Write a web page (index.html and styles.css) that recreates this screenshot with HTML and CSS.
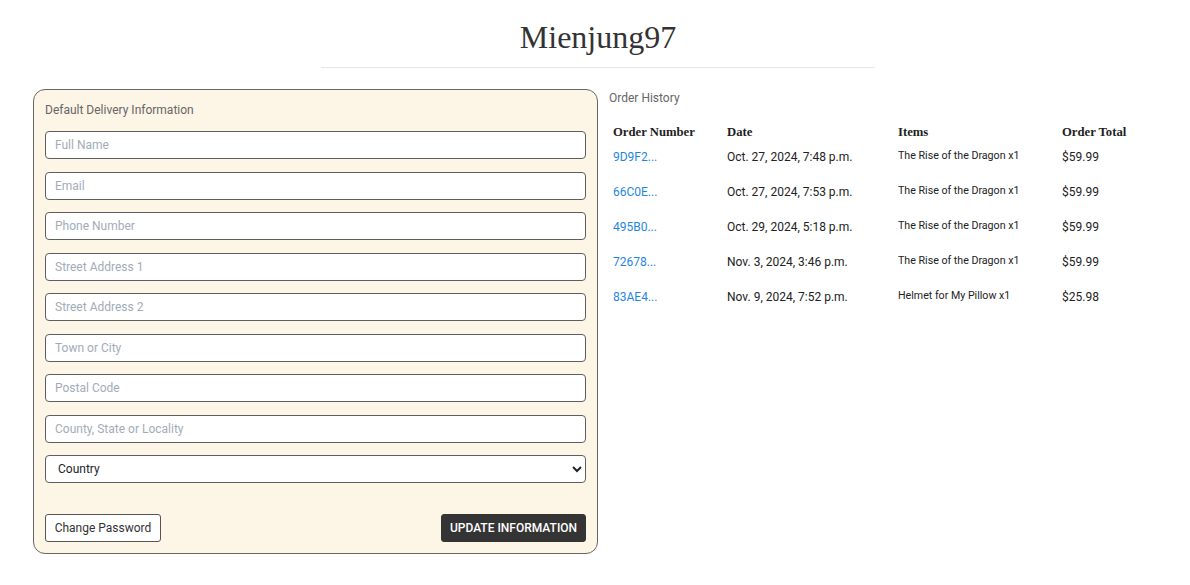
FILE: index.html
```html
<!DOCTYPE html>
<html lang="en">
<head>
<meta charset="utf-8">
<title>Mienjung97</title>
<link rel="stylesheet" href="styles.css">
</head>
<body>
<header class="page-head">
  <h1 class="title">Mienjung97</h1>
  <hr class="rule">
</header>
<main class="content">
  <form class="card">
    <div class="card-label">Default Delivery Information</div>
    <div class="fields">
      <input class="field" type="text" placeholder="Full Name">
      <input class="field" type="text" placeholder="Email">
      <input class="field" type="text" placeholder="Phone Number">
      <input class="field" type="text" placeholder="Street Address 1">
      <input class="field" type="text" placeholder="Street Address 2">
      <input class="field" type="text" placeholder="Town or City">
      <input class="field" type="text" placeholder="Postal Code">
      <input class="field" type="text" placeholder="County, State or Locality">
      <select class="field select"><option>Country</option></select>
    </div>
    <div class="actions">
      <button type="button" class="btn-outline">Change Password</button>
      <button type="button" class="btn-dark">UPDATE INFORMATION</button>
    </div>
  </form>
  <section class="orders">
    <div class="orders-label">Order History</div>
    <table class="order-table">
      <thead>
        <tr><th class="c1">Order Number</th><th class="c2">Date</th><th class="c3">Items</th><th class="c4">Order Total</th></tr>
      </thead>
      <tbody>
        <tr><td><a href="#">9D9F2...</a></td><td>Oct. 27, 2024, 7:48 p.m.</td><td class="item">The Rise of the Dragon x1</td><td>$59.99</td></tr>
        <tr><td><a href="#">66C0E...</a></td><td>Oct. 27, 2024, 7:53 p.m.</td><td class="item">The Rise of the Dragon x1</td><td>$59.99</td></tr>
        <tr><td><a href="#">495B0...</a></td><td>Oct. 29, 2024, 5:18 p.m.</td><td class="item">The Rise of the Dragon x1</td><td>$59.99</td></tr>
        <tr><td><a href="#">72678...</a></td><td>Nov. 3, 2024, 3:46 p.m.</td><td class="item">The Rise of the Dragon x1</td><td>$59.99</td></tr>
        <tr><td><a href="#">83AE4...</a></td><td>Nov. 9, 2024, 7:52 p.m.</td><td class="item">Helmet for My Pillow x1</td><td>$25.98</td></tr>
      </tbody>
    </table>
  </section>
</main>
</body>
</html>
```

FILE: styles.css
```css
* { box-sizing: border-box; }
html, body { margin: 0; padding: 0; background: #fff; }
body {
  font-family: Roboto, "Liberation Sans", Arial, sans-serif;
  color: #212529;
  font-size: 12px;
}
.page-head {
  padding-top: 17px;
  padding-left: 6px;
  text-align: center;
}
.title {
  margin: 0;
  font-family: "Liberation Serif", "Times New Roman", serif;
  font-weight: normal;
  font-size: 32px;
  line-height: 40px;
  color: #333;
}
.rule {
  width: 554px;
  margin: 10px auto 0;
  border: 0;
  border-top: 1px solid #e6e6e6;
  height: 0;
}
.content {
  display: flex;
  align-items: flex-start;
  gap: 11px;
  padding: 21px 0 0 33px;
}
.card {
  width: 565px;
  background: #fdf5e6;
  border: 1px solid #666;
  border-radius: 12px;
  padding: 11px;
}
.card-label {
  font-size: 12px;
  line-height: 18px;
  color: #666;
  margin-bottom: 12px;
}
.fields {
  display: flex;
  flex-direction: column;
  gap: 12.5px;
}
.field {
  display: block;
  width: 100%;
  height: 28px;
  border: 1px solid #5e5e5e;
  border-radius: 4px;
  background: #fff;
  padding: 0 9px;
  font-family: Roboto, "Liberation Sans", Arial, sans-serif;
  font-size: 12px;
  color: #212529;
  outline: none;
}
.field::placeholder { color: #a2acb8; }
.select {
  padding: 0 8px;
  color: #212529;
}
.actions {
  display: flex;
  justify-content: space-between;
  align-items: center;
  margin-top: 31px;
}
.btn-outline, .btn-dark {
  height: 28px;
  border-radius: 3px;
  font-family: Roboto, "Liberation Sans", Arial, sans-serif;
  font-size: 12px;
  cursor: pointer;
  padding: 0;
}
.btn-outline {
  width: 116px;
  background: #fff;
  border: 1px solid #555;
  color: #333;
}
.btn-dark {
  width: 145px;
  background: #343434;
  border: 1px solid #343434;
  color: #fff;
  font-weight: 500;
}
.orders {
  flex: 1;
}
.orders-label {
  font-size: 12px;
  line-height: 18px;
  color: #666;
}
.order-table {
  border-collapse: collapse;
  margin-top: 16px;
}
.order-table th {
  font-family: "Liberation Serif", "Times New Roman", serif;
  font-weight: bold;
  font-size: 12.7px;
  color: #1e1e1e;
  text-align: left;
  padding: 0 4px 7px;
  line-height: 18px;
  vertical-align: top;
}
.order-table .c1 { width: 114px; }
.order-table .c2 { width: 171px; }
.order-table .c3 { width: 164px; }
.order-table .c4 { width: 110px; }
.order-table td {
  padding: 0 4px 17px;
  line-height: 18px;
  vertical-align: top;
  font-size: 12px;
  color: #222;
}
.order-table td.item {
  font-size: 10.65px;
  line-height: 16px;
}
.order-table a {
  color: #1f86e6;
  text-decoration: none;
}
```
